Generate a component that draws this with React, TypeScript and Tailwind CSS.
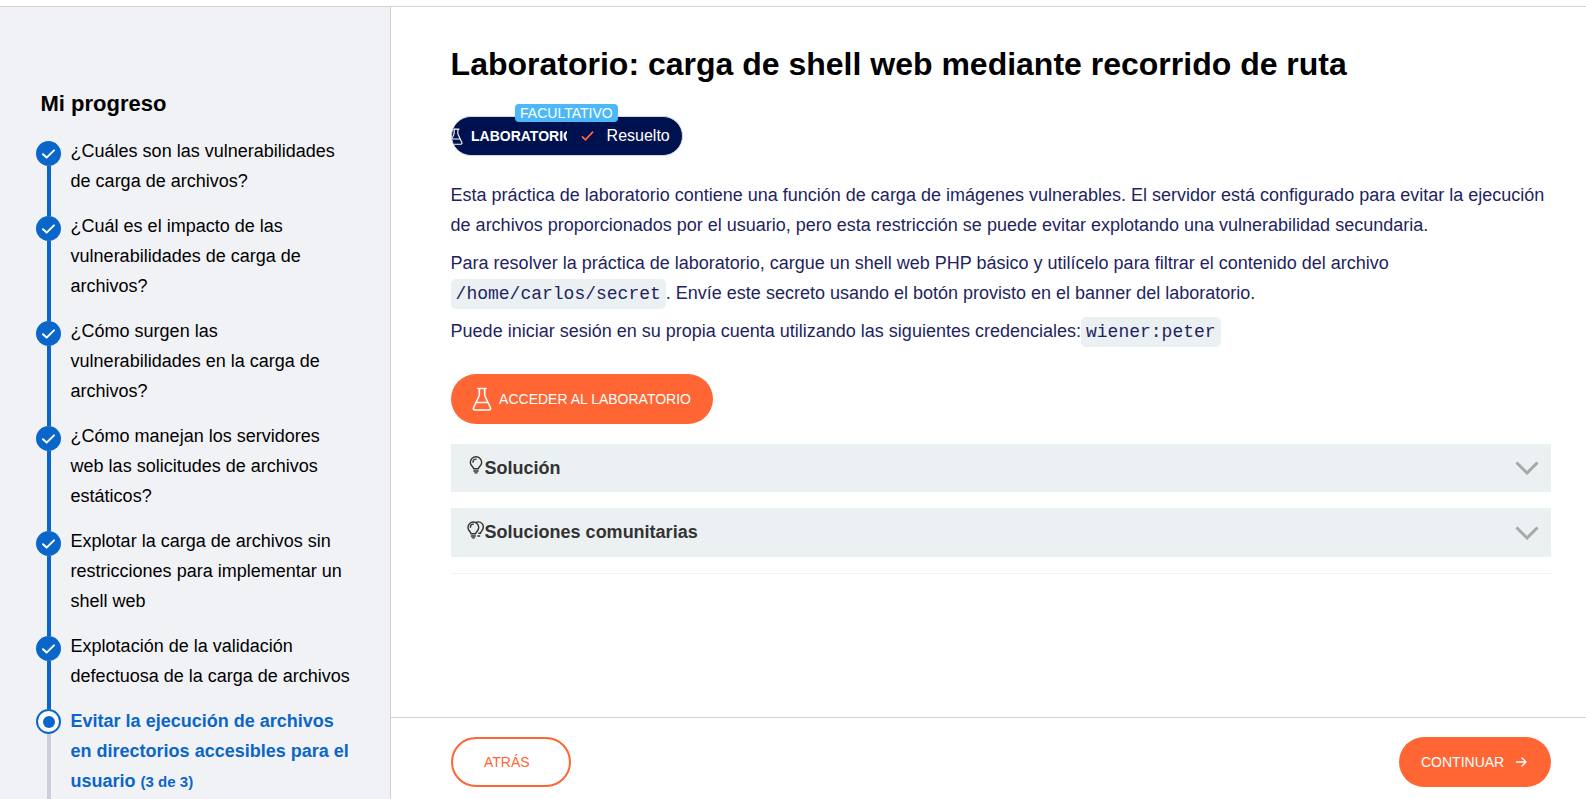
const Check = () => (
  <svg viewBox="0 0 25 25" className="h-[25px] w-[25px]">
    <path d="M7 13.2l3.600 3.400L18 9.400" fill="none" stroke="#fff" strokeWidth="2" strokeLinecap="round" strokeLinejoin="round" />
  </svg>
);

const Flask = ({ className }: { className: string }) => (
  <svg viewBox="0 0 20 24" className={className} fill="none" stroke="currentColor" strokeWidth="1.600" strokeLinejoin="round" strokeLinecap="round">
    <path d="M5.800 1.500h8.400M7.300 1.500v7L1.600 20.600c-.6 1.200.2 2.400 1.500 2.400h13.800c1.300 0 2.100-1.200 1.500-2.400L12.700 8.500v-7" />
    <path d="M4.500 15.500h11" />
  </svg>
);

const Bulb = () => (
  <svg viewBox="0 0 14 19" className="h-[18px] w-[14px]" fill="none" stroke="#333332" strokeWidth="1.500" strokeLinecap="round">
    <path d="M4.700 13.500C4.300 11.300 1 10.200 1 6.800a6 6 0 0 1 12 0c0 3.400-3.300 4.500-3.700 6.700z" />
    <path d="M3.800 6.500A3.200 3.200 0 0 1 7 3.300M4.800 15.800h4.400M5.800 17.800h2.400" />
  </svg>
);

const Bulbs = () => (
  <svg viewBox="0 0 18 19" className="h-[18px] w-[17px]" fill="none" stroke="#333332" strokeWidth="1.500" strokeLinecap="round">
    <path d="M9.500 1.500c.8-.4 1.600-.6 2.500-.6a5.300 5.300 0 0 1 5.300 5.400c0 3.200-2.600 4.300-3 6.700h-1.800" />
    <path d="M4.400 13.500C4 11.300 1 10.200 1 6.800a5.700 5.700 0 0 1 11.400 0c0 3.400-3 4.500-3.400 6.700z" />
    <path d="M3.600 6.500A3.200 3.200 0 0 1 6.700 3.300M4.600 15.800h4.200M5.500 17.800h2.400M11.500 15.800h2" />
  </svg>
);

const Chevron = () => (
  <svg viewBox="0 0 24 14" className="h-[14px] w-[24px]" fill="none" stroke="#a6a8a9" strokeWidth="3">
    <path d="M1.500 1.500L12 12 22.500 1.500" />
  </svg>
);

const items = [
  "¿Cuáles son las vulnerabilidades de carga de archivos?",
  "¿Cuál es el impacto de las vulnerabilidades de carga de archivos?",
  "¿Cómo surgen las vulnerabilidades en la carga de archivos?",
  "¿Cómo manejan los servidores web las solicitudes de archivos estáticos?",
  "Explotar la carga de archivos sin restricciones para implementar un shell web",
  "Explotación de la validación defectuosa de la carga de archivos",
];

const Code = ({ children }: { children: string }) => (
  <code className="rounded-[5px] bg-[#ebf0f2] px-[5px] py-[5px] font-['Liberation_Mono',monospace] text-[18px] leading-[20px]">{children}</code>
);

export default function App() {
  return (
    <div className="h-screen overflow-hidden bg-white pt-[6px] font-['Liberation_Sans',Arial,sans-serif]">
      <div className="flex h-[793px] border-t border-[#d3d3d3]">
        <aside className="w-[391px] shrink-0 overflow-hidden border-r border-[#cfd1d4] bg-[#f1f2f6] pl-[36px] pt-[82px]">
          <h2 className="mb-[17px] ml-[4.500px] text-[22px] font-bold leading-[30px] text-black">Mi progreso</h2>
          <ol>
            {items.map((t, i) => (
              <li key={t} className="flex gap-[9.600px]">
                <div className="flex w-[25px] shrink-0 flex-col items-center">
                  <div className={`h-[5px] w-1 ${i === 0 ? "" : "bg-[#0a66c8]"}`} />
                  <div className="h-[25px] w-[25px] rounded-full bg-[#0a66c8]"><Check /></div>
                  <div className="w-1 flex-1 bg-[#0a66c8]" />
                </div>
                <p className="w-[280px] pb-[15px] text-[18px] leading-[30px] text-black">{t}</p>
              </li>
            ))}
            <li className="flex gap-[9.600px]">
              <div className="flex w-[25px] shrink-0 flex-col items-center">
                <div className="h-[3px] w-1 bg-[#0a66c8]" />
                <div className="flex h-[25px] w-[25px] items-center justify-center rounded-full border-[2px] border-[#0a66c8] bg-white">
                  <div className="h-[12px] w-[12px] rounded-full bg-[#0a66c8]" />
                </div>
                <div className="w-1 flex-1 bg-[#cdcddc]" />
              </div>
              <p className="w-[280px] pb-[15px] text-[18px] font-bold leading-[30px] text-[#0a66c8]">
                Evitar la ejecución de archivos en directorios accesibles para el usuario <span className="text-[15px]">(3 de 3)</span>
              </p>
            </li>
          </ol>
        </aside>
        <main className="flex min-w-0 flex-1 flex-col">
          <div className="flex-1 pl-[59.600px] pr-[35px] pt-[34px]">
            <h1 className="text-[32px] font-bold leading-[46px] text-black">Laboratorio: carga de shell web mediante recorrido de ruta</h1>
            <div className="relative mt-[29px] w-[232px]">
              <span className="absolute left-[64px] top-[-12px] z-10 rounded-[4px] bg-[#4cb8f8] px-[5.500px] text-[14px] leading-[18px] text-white">FACULTATIVO</span>
              <div className="flex h-[40px] items-center overflow-hidden rounded-full border border-[#d5d8e4] bg-[#00114f] text-white">
                <div className="flex h-full w-[115px] shrink-0 items-center overflow-hidden">
                  <Flask className="ml-[-3px] h-[17px] w-[14px] shrink-0" />
                  <span className="ml-[8.400px] text-[14px] font-bold">LABORATORIO</span>
                </div>
                <svg viewBox="0 0 16 14" className="ml-[13px] h-[12px] w-[15px] shrink-0" fill="none" stroke="#ff6633" strokeWidth="2">
                  <path d="M1.500 7.500l4 4L14.500 2" />
                </svg>
                <span className="ml-[12px] text-[16px]">Resuelto</span>
              </div>
            </div>
            <div className="mt-[24px] text-[18px] leading-[30px] text-[#231f60]">
              <p>Esta práctica de laboratorio contiene una función de carga de imágenes vulnerables. El servidor está configurado para evitar la ejecución de archivos proporcionados por el usuario, pero esta restricción se puede evitar explotando una vulnerabilidad secundaria.</p>
              <p className="mt-2">Para resolver la práctica de laboratorio, cargue un shell web PHP básico y utilícelo para filtrar el contenido del archivo <Code>/home/carlos/secret</Code>. Envíe este secreto usando el botón provisto en el banner del laboratorio.</p>
              <p className="mt-2">Puede iniciar sesión en su propia cuenta utilizando las siguientes credenciales:<Code>wiener:peter</Code></p>
            </div>
            <button className="mt-[28px] flex h-[50px] w-[262px] items-center rounded-full bg-[#ff6633] pl-[21px] text-[14px] text-white">
              <Flask className="h-[24px] w-[20px] shrink-0" />
              <span className="ml-[7.500px]">ACCEDER AL LABORATORIO</span>
            </button>
            <div className="mt-[20px] flex h-[48px] items-center bg-[#ebf0f2] pl-[18px] pr-[12px] text-[18px] font-bold text-[#333332]">
              <div className="mb-[6px]"><Bulb /></div>
              <span className="ml-[2px] flex-1">Solución</span>
              <Chevron />
            </div>
            <div className="mt-[16px] flex h-[49px] items-center bg-[#ebf0f2] pl-[16px] pr-[12px] text-[18px] font-bold text-[#333332]">
              <div className="mb-[6px]"><Bulbs /></div>
              <span className="ml-[1px] flex-1">Soluciones comunitarias</span>
              <Chevron />
            </div>
            <div className="mt-[16px] border-t border-[#f1f2f4]" />
          </div>
          <footer className="flex h-[82px] shrink-0 items-start justify-between border-t border-[#d3d3d3] pl-[60px] pr-[35px] pt-[19px]">
            <button className="h-[50px] w-[120px] rounded-full border-2 border-[#ff6633] text-left pl-[31px] text-[14px] text-[#ff6633]">ATRÁS</button>
            <button className="flex h-[50px] w-[152px] items-center rounded-full bg-[#ff6633] pl-[22px] text-[14px] text-white">
              CONTINUAR
              <svg viewBox="0 0 12 12" className="ml-[11px] h-[12px] w-[12px]" fill="none" stroke="#fff" strokeWidth="1.300">
                <path d="M1 6h10M6.500 1.500L11 6l-4.500 4.500" />
              </svg>
            </button>
          </footer>
        </main>
      </div>
    </div>
  );
}
